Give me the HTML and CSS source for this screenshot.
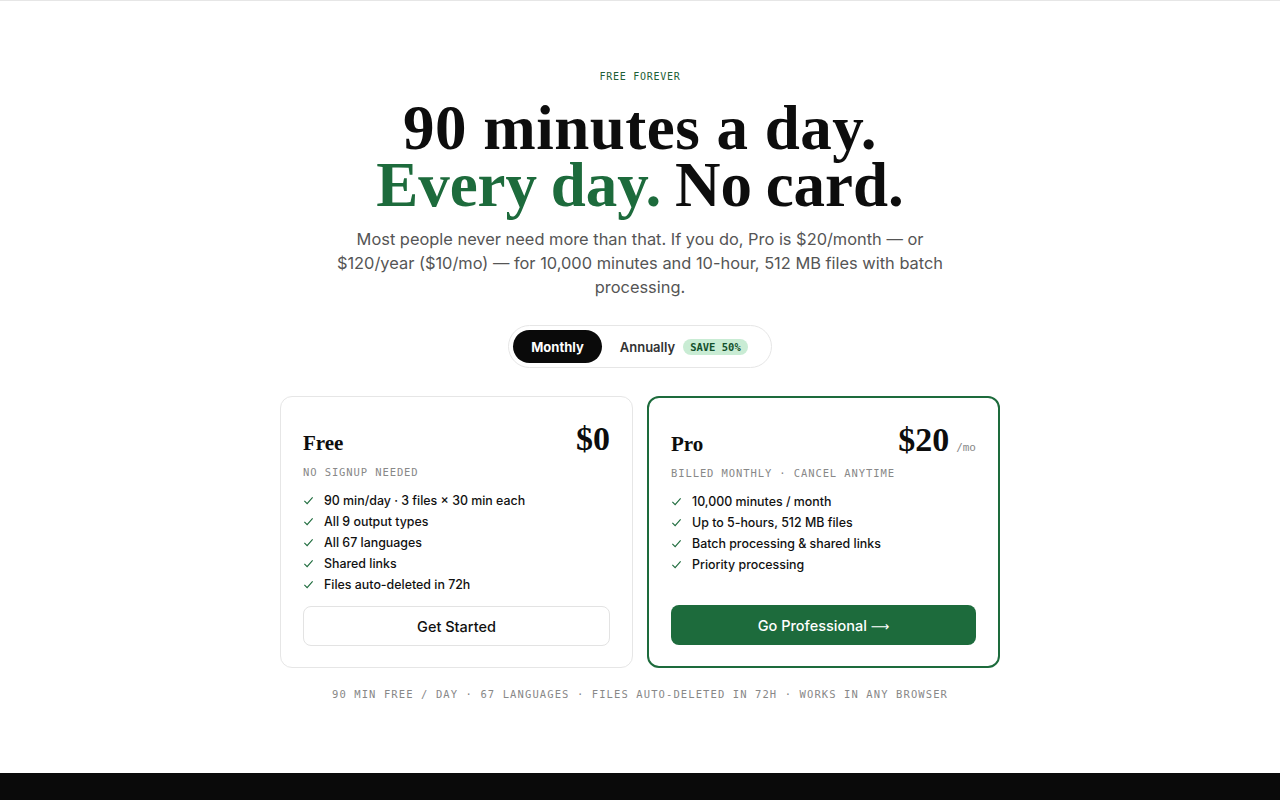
FILE: index.html
```html
<!DOCTYPE html>
<html lang="en">
<head>
<meta charset="utf-8">
<title>Pricing</title>
<link rel="stylesheet" href="styles.css">
</head>
<body>
<div class="topline"></div>
<main class="pricing">
  <div class="eyebrow">FREE FOREVER</div>
  <h1 class="headline"><span class="line">90 minutes a day.</span><span class="line"><span class="green">Every day.</span> No card.</span></h1>
  <p class="lede">Most people never need more than that. If you do, Pro is $20/month — or $120/year ($10/mo) — for 10,000 minutes and 10-hour, 512 MB files with batch processing.</p>
  <div class="toggle">
    <button class="toggle-btn active">Monthly</button>
    <button class="toggle-btn annual">Annually <span class="save">SAVE 50%</span></button>
  </div>
  <div class="cards">
    <section class="card">
      <div class="card-head">
        <h2 class="plan">Free</h2>
        <div class="price">$0</div>
      </div>
      <div class="sub">NO SIGNUP NEEDED</div>
      <ul class="features">
        <li><svg class="check" viewBox="0 0 12 12"><path d="M1.5 6.5 L4.5 9.5 L10.5 2.5"/></svg>90 min/day · 3 files × 30 min each</li>
        <li><svg class="check" viewBox="0 0 12 12"><path d="M1.5 6.5 L4.5 9.5 L10.5 2.5"/></svg>All 9 output types</li>
        <li><svg class="check" viewBox="0 0 12 12"><path d="M1.5 6.5 L4.5 9.5 L10.5 2.5"/></svg>All 67 languages</li>
        <li><svg class="check" viewBox="0 0 12 12"><path d="M1.5 6.5 L4.5 9.5 L10.5 2.5"/></svg>Shared links</li>
        <li><svg class="check" viewBox="0 0 12 12"><path d="M1.5 6.5 L4.5 9.5 L10.5 2.5"/></svg>Files auto-deleted in 72h</li>
      </ul>
      <button class="btn btn-outline">Get Started</button>
    </section>
    <section class="card card-pro">
      <div class="card-head">
        <h2 class="plan">Pro</h2>
        <div class="price">$20<span class="per">/mo</span></div>
      </div>
      <div class="sub">BILLED MONTHLY · CANCEL ANYTIME</div>
      <ul class="features">
        <li><svg class="check" viewBox="0 0 12 12"><path d="M1.5 6.5 L4.5 9.5 L10.5 2.5"/></svg>10,000 minutes / month</li>
        <li><svg class="check" viewBox="0 0 12 12"><path d="M1.5 6.5 L4.5 9.5 L10.5 2.5"/></svg>Up to 5-hours, 512 MB files</li>
        <li><svg class="check" viewBox="0 0 12 12"><path d="M1.5 6.5 L4.5 9.5 L10.5 2.5"/></svg>Batch processing &amp; shared links</li>
        <li><svg class="check" viewBox="0 0 12 12"><path d="M1.5 6.5 L4.5 9.5 L10.5 2.5"/></svg>Priority processing</li>
      </ul>
      <button class="btn btn-green">Go Professional <span class="arrow">⟶</span></button>
    </section>
  </div>
  <div class="footnote">90 MIN FREE / DAY · 67 LANGUAGES · FILES AUTO-DELETED IN 72H · WORKS IN ANY BROWSER</div>
</main>
<footer class="site-footer"></footer>
</body>
</html>
```

FILE: styles.css
```css
* { box-sizing: border-box; }
html, body { margin: 0; padding: 0; background: #fff; }
body {
  font-family: Inter, "Noto Sans", sans-serif;
  color: #0d0d0d;
}
.topline { border-top: 1px solid #e6e6e6; }

.pricing {
  display: flex;
  flex-direction: column;
  align-items: center;
  text-align: center;
  padding: 70px 0 72px;
}
.eyebrow {
  font-family: "DejaVu Sans Mono", "Liberation Mono", monospace;
  font-size: 10px;
  line-height: 12px;
  letter-spacing: 0.75px;
  color: #1d5e36;
}
.headline {
  margin: 17px 0 0;
  display: flex;
  flex-direction: column;
  align-items: center;
  font-family: "Liberation Serif", "DejaVu Serif", serif;
  font-weight: 700;
  font-size: 63px;
  line-height: 57px;
  color: #0d0d0d;
}
.line { display: block; letter-spacing: 0.5px; }
.line + .line { letter-spacing: 0; word-spacing: -2px; }
.green { color: #1d6b3c; }
.lede {
  margin: 13px 0 0;
  max-width: 620px;
  font-size: 16.4px;
  line-height: 24px;
  color: #555;
}

.toggle {
  margin-top: 26px;
  display: flex;
  align-items: center;
  padding: 4px;
  border: 1px solid #e6e6e6;
  border-radius: 999px;
  background: #fff;
}
.toggle-btn {
  border: 0;
  background: transparent;
  font-family: Inter, sans-serif;
  font-size: 13px;
  font-weight: 600;
  color: #333;
  height: 33px;
  padding: 0 18px;
  border-radius: 999px;
  display: flex;
  align-items: center;
  gap: 8px;
}
.toggle-btn.active { background: #0a0a0a; color: #fff; font-weight: 700; }
.toggle-btn.annual { padding: 0 19px 0 18px; }
.save {
  font-family: "DejaVu Sans Mono", monospace;
  font-size: 10.5px;
  font-weight: 700;
  color: #14502c;
  background: #c9ecd4;
  padding: 2px 7px;
  border-radius: 999px;
}

.cards {
  margin-top: 28px;
  display: grid;
  grid-template-columns: 353px 353px;
  gap: 14px;
  text-align: left;
}
.card {
  border: 1px solid #e6e6e6;
  border-radius: 12px;
  padding: 22px 22px 21px;
  display: flex;
  flex-direction: column;
  min-height: 272px;
}
.card-pro { border: 2px solid #1d6b3c; padding: 22px 22px 21px; }
.card-head {
  display: flex;
  justify-content: space-between;
  align-items: baseline;
  height: 40px;
}
.plan {
  margin: 0;
  font-family: "Liberation Serif", serif;
  font-weight: 700;
  font-size: 21px;
  line-height: 40px;
}
.price {
  font-family: "Liberation Serif", serif;
  font-weight: 700;
  font-size: 34px;
  line-height: 40px;
}
.per {
  font-family: "DejaVu Sans Mono", monospace;
  font-weight: 400;
  font-size: 11px;
  line-height: 1;
  color: #888;
  margin-left: 7px;
}
.sub {
  margin-top: 6px;
  font-family: "DejaVu Sans Mono", monospace;
  font-size: 10.5px;
  line-height: 14px;
  letter-spacing: 0.9px;
  color: #888;
}
.features {
  list-style: none;
  margin: 11px 0 11px;
  padding: 0;
}
.features li {
  display: flex;
  align-items: center;
  font-size: 12.4px;
  font-weight: 500;
  line-height: 21px;
  color: #111;
}
.check {
  width: 11px;
  height: 11px;
  margin-right: 10px;
  fill: none;
  stroke: #1d6b3c;
  stroke-width: 1.2;
}
.btn {
  margin-top: auto;
  height: 40px;
  border-radius: 8px;
  font-family: Inter, sans-serif;
  font-size: 14.5px;
  font-weight: 500;
  width: 100%;
}
.btn-outline { background: #fff; border: 1px solid #e3e3e3; color: #111; }
.btn-green { background: #1d6b3c; border: 0; color: #fff; }
.arrow { font-family: "DejaVu Sans", sans-serif; font-size: 13px; }

.footnote {
  margin-top: 19px;
  font-family: "DejaVu Sans Mono", monospace;
  font-size: 10.5px;
  line-height: 14px;
  letter-spacing: 1.1px;
  color: #888;
}
.site-footer {
  background: #0a0a0a;
  height: 200px;
}
```
